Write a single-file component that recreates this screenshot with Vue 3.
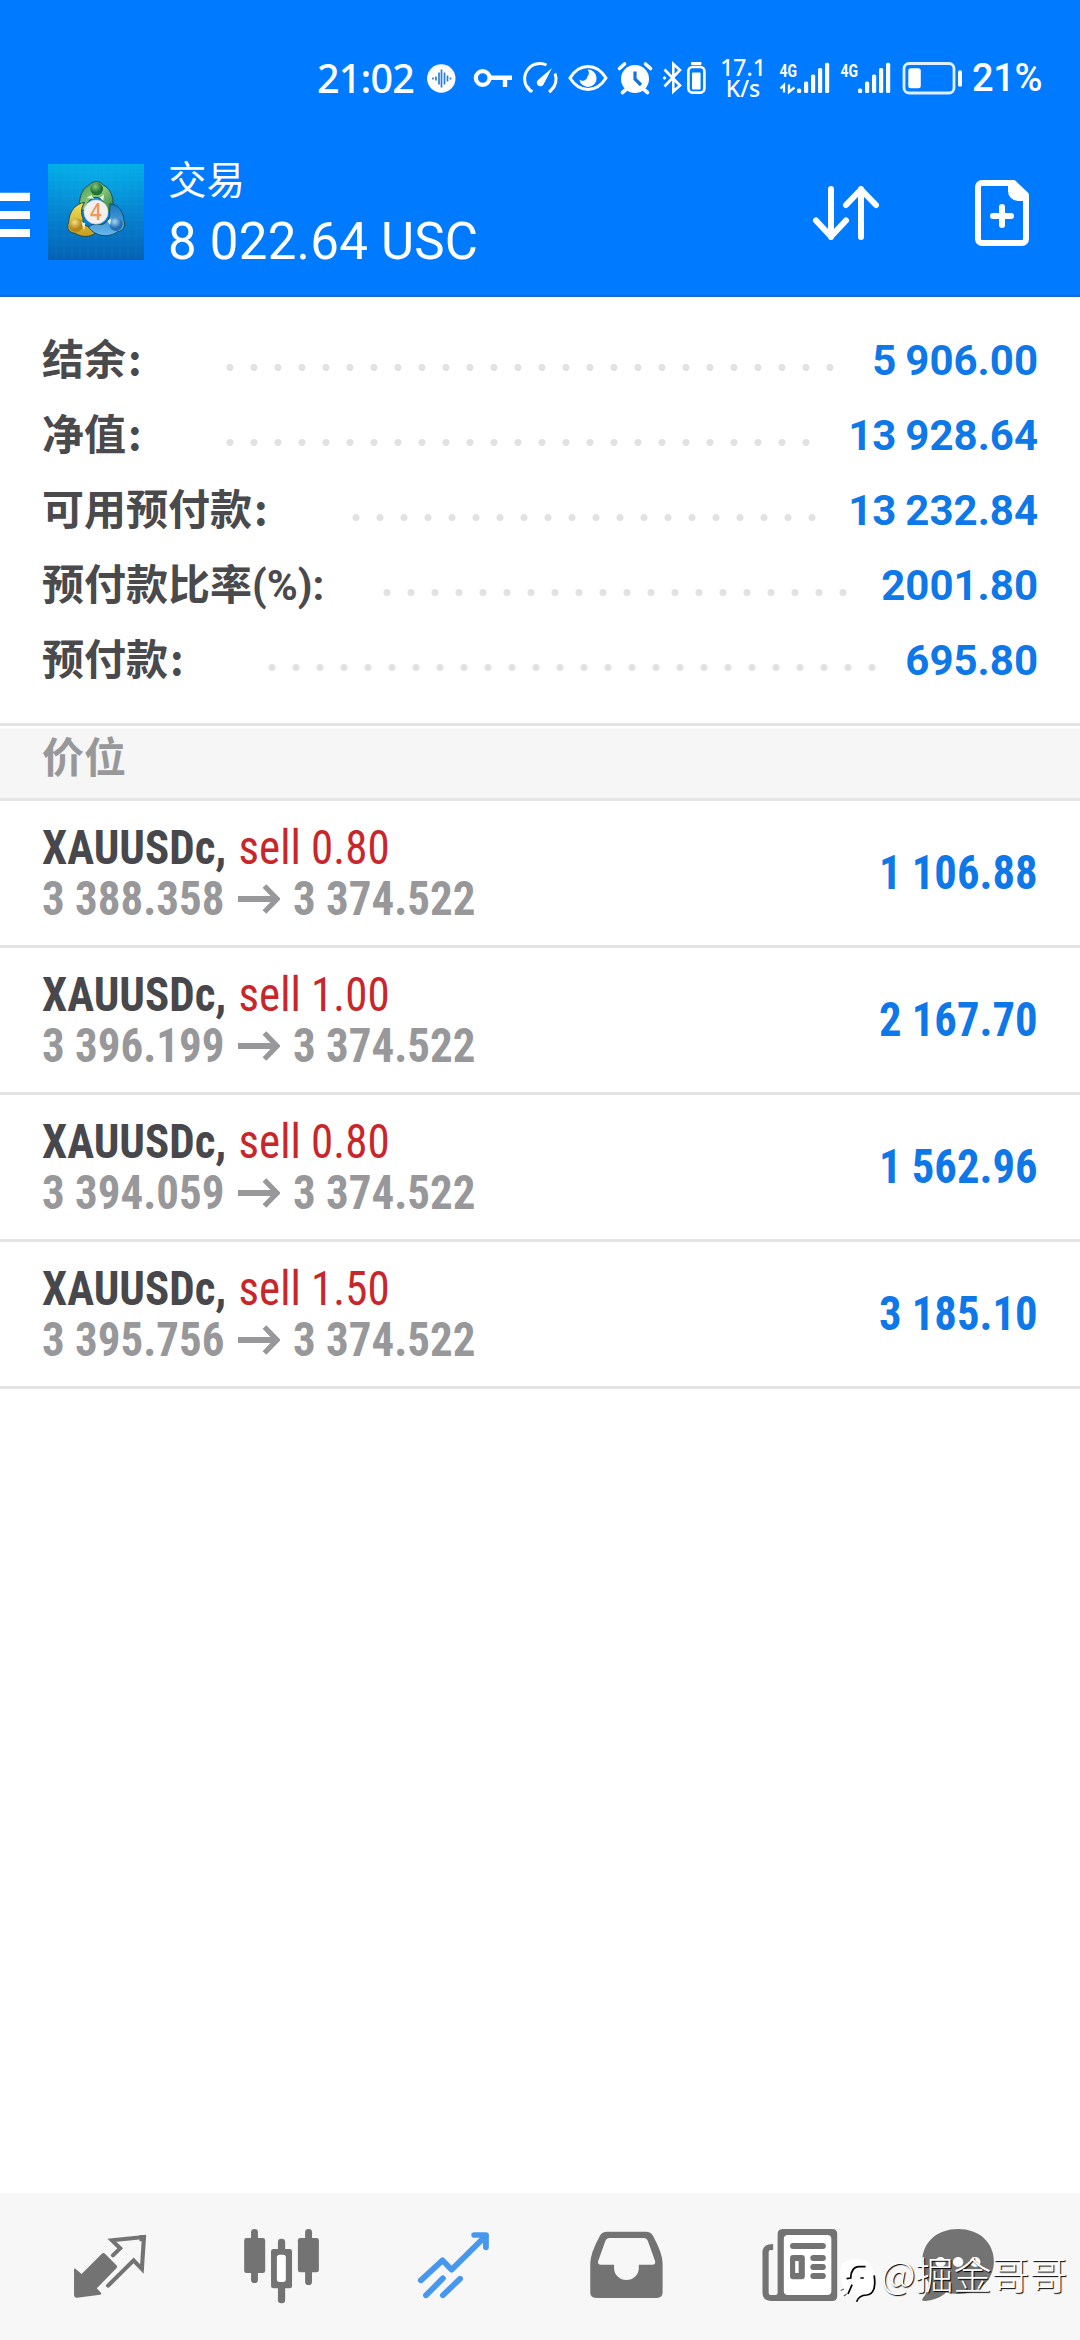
<script setup>
const summary = [
  { label: '结余', colon: true, lead: 176, dots: 26, value: '5 906.00' },
  { label: '净值', colon: true, lead: 176, dots: 25, value: '13 928.64' },
  { label: '可用预付款', colon: true, lead: 302, dots: 20, value: '13 232.84' },
  { label: '预付款比率(%):', colon: false, lead: 333, dots: 20, value: '2001.80' },
  { label: '预付款', colon: true, lead: 218, dots: 26, value: '695.80' },
]
const positions = [
  { volume: '0.80', open: '3 388.358', current: '3 374.522', profit: '1 106.88' },
  { volume: '1.00', open: '3 396.199', current: '3 374.522', profit: '2 167.70' },
  { volume: '0.80', open: '3 394.059', current: '3 374.522', profit: '1 562.96' },
  { volume: '1.50', open: '3 395.756', current: '3 374.522', profit: '3 185.10' },
]
// signal bars: x offset and top edge
const bars = [[0, 88.5], [7, 81.5], [14, 74.5], [21, 68], [28, 62.7]]
const wave = [[433, 1], [436, 2], [439, 6], [441.5, 9], [444.5, 6], [447.5, 3], [450.5, 1]]
</script>

<template>
  <div class="screen">
    <header class="top">
      <div class="status">
        <span class="time">21:02</span>
        <svg width="36" height="60" viewBox="424 48 36 60">
          <circle cx="441.3" cy="78.5" r="14.2" fill="#fff" />
          <path v-for="w in wave" :key="w[0]" :d="`M${w[0]} ${78.5 - w[1]}V${78.5 + w[1]}`" stroke="#2a7fd0" stroke-width="1.7" />
        </svg>
        <svg width="60" height="60" viewBox="460 48 60 60" fill="none" stroke="#fff">
          <circle cx="482.7" cy="78" r="6.9" stroke-width="4.2" />
          <path d="M490 77.8H512M505 78V87" stroke-width="4.4" />
        </svg>
        <svg width="44" height="60" viewBox="520 48 44 60" fill="none" stroke="#fff" stroke-width="3">
          <path d="M532.5 91.5L529.5 90A15.3 15.3 0 0 1 546.5 65M555 73.5A15.3 15.3 0 0 1 551 90.5L549 92M527.5 86.5L531 92M554 86.5L549.5 92" />
          <path d="M552 68L543.5 84.5A3.6 3.6 0 1 1 538 80Z" fill="#fff" stroke="none" />
        </svg>
        <svg width="50" height="60" viewBox="564 48 50 60">
          <path d="M570 78C575 70 581 66.5 588 66.5S601 70 606 78C601 86 595 89.5 588 89.5S575 86 570 78Z" fill="none" stroke="#fff" stroke-width="3" />
          <path d="M587.5 69.5A8.7 8.7 0 1 1 579.3 79.5A5 5 0 0 0 587.5 76.5A5.5 5.5 0 0 0 587.5 69.5Z" fill="#fff" />
        </svg>
        <svg width="44" height="60" viewBox="614 48 44 60">
          <circle cx="635" cy="79" r="14" fill="#fff" />
          <path d="M619.5 68.5L624.5 64M650.5 68.5L645.5 64M625.5 90L622.5 92.5M644.5 90L647.5 92.5" stroke="#fff" stroke-width="3.6" stroke-linecap="round" />
          <path d="M635 71.5V79L641 85" stroke="#1473d6" stroke-width="3.2" fill="none" />
        </svg>
        <svg width="26" height="60" viewBox="658 48 26 60" fill="none" stroke="#fff" stroke-width="2.6">
          <path d="M664.5 69.5L680 85.5L673.3 91.5V64L680 70L664.5 86.5" />
          <circle cx="664.5" cy="78" r="1.2" fill="#fff" stroke-width="1" />
        </svg>
        <svg width="30" height="60" viewBox="684 48 30 60">
          <rect x="688.4" y="67" width="16" height="25.6" rx="4" fill="none" stroke="#fff" stroke-width="2.6" />
          <rect x="692" y="72.5" width="8.6" height="17" rx="1" fill="#fff" />
          <rect x="691" y="62" width="10.5" height="3" rx="1" fill="#fff" />
        </svg>
        <div class="speed"><span>17.1</span><span>K/s</span></div>
        <svg width="64" height="60" viewBox="774 48 64 60" fill="#fff">
          <text x="779.5" y="76.5" class="net" textLength="17.5" lengthAdjust="spacingAndGlyphs">4G</text>
          <path d="M784 92.5V85L780.5 88.5M789 84.5V92L794.5 87.5" fill="none" stroke="#fff" stroke-width="2.3" />
          <rect v-for="b in bars" :key="b[0]" :x="797 + b[0]" :y="b[1]" width="4.2" :height="93 - b[1]" rx="1.6" />
        </svg>
        <svg width="60" height="60" viewBox="838 48 60 60" fill="#fff">
          <text x="840.5" y="76.5" class="net" textLength="17.5" lengthAdjust="spacingAndGlyphs">4G</text>
          <rect v-for="b in bars" :key="b[0]" :x="858 + b[0]" :y="b[1]" width="4.2" :height="93 - b[1]" rx="1.6" />
        </svg>
        <svg width="72" height="60" viewBox="898 48 72 60" fill="#fff">
          <rect x="904" y="63.5" width="50" height="29.5" rx="5" fill="none" stroke="#fff" stroke-opacity=".88" stroke-width="2.8" />
          <rect x="908.3" y="68.3" width="12.5" height="20" rx="2.5" />
          <rect x="958" y="70.3" width="4" height="16.5" rx="2" />
        </svg>
        <span class="percent">21%</span>
      </div>
      <div class="bar">
        <svg width="48" height="137" viewBox="0 160 48 137"><path d="M0 196.8H30M0 215H30M0 233H30" stroke="#fff" stroke-width="8.2" /></svg>
        <svg class="logo" width="96" height="96" viewBox="144 73 288 288">
          <defs>
            <linearGradient id="sky" x1="0" y1="0" x2="0" y2="1"><stop offset="0" stop-color="#02aee8" /><stop offset=".45" stop-color="#0588d3" /><stop offset="1" stop-color="#0461b4" /></linearGradient>
            <radialGradient id="glow"><stop offset="0" stop-color="#12b6ee" stop-opacity=".25" /><stop offset="1" stop-color="#12b6ee" stop-opacity="0" /></radialGradient>
            <linearGradient id="green" x1="0" y1="0" x2="1" y2="1"><stop offset="0" stop-color="#3f9a50" /><stop offset=".5" stop-color="#8ac67c" /><stop offset="1" stop-color="#23803a" /></linearGradient>
            <linearGradient id="gold" x1="0" y1="0" x2="0" y2="1"><stop offset="0" stop-color="#f2e25a" /><stop offset="1" stop-color="#c49c1b" /></linearGradient>
            <linearGradient id="azure" x1="0" y1="0" x2="0" y2="1"><stop offset="0" stop-color="#1a74c0" /><stop offset="1" stop-color="#66b8ee" /></linearGradient>
            <radialGradient id="gb" cx=".4" cy=".3"><stop offset="0" stop-color="#86c784" /><stop offset="1" stop-color="#1e7233" /></radialGradient>
            <radialGradient id="yb" cx=".4" cy=".3"><stop offset="0" stop-color="#f5e37c" /><stop offset="1" stop-color="#b2861a" /></radialGradient>
            <radialGradient id="bb" cx=".4" cy=".3"><stop offset="0" stop-color="#a6d9f5" /><stop offset="1" stop-color="#226eb4" /></radialGradient>
          </defs>
          <rect x="144" y="73" width="288" height="288" fill="url(#sky)" />
          <circle cx="288" cy="120" r="130" fill="url(#glow)" />
          <path d="M168 73V361M192 73V361M216 73V361M240 73V361M264 73V361M288 73V361M312 73V361M336 73V361M360 73V361M384 73V361M408 73V361M144 97H432M144 121H432M144 145H432M144 169H432M144 193H432M144 217H432M144 241H432M144 265H432M144 289H432M144 313H432M144 337H432" stroke="#fff" stroke-opacity=".07" stroke-width="2" />
          <g stroke="#1c4c52" stroke-width="3">
            <path d="M238 198C238 164 250 144 268 136C280 122 298 122 310 136C332 148 341 172 339 198C336 216 326 221 318 211C315 188 304 174 288 173C270 175 259 190 256 213C246 213 240 208 238 198Z" fill="url(#green)" />
            <path d="M254 188C228 192 207 214 206 248C198 266 208 280 226 281C244 294 272 294 289 278C295 267 288 256 274 262C256 262 247 252 249 236C242 220 244 202 254 188Z" fill="url(#gold)" />
            <path d="M330 192C352 194 370 212 371 240C379 258 370 275 352 276C330 294 288 294 265 262C277 252 290 251 304 255C322 250 330 236 329 220Z" fill="url(#azure)" />
          </g>
          <circle cx="290" cy="148" r="19" fill="url(#gb)" />
          <circle cx="228" cy="256" r="21" fill="url(#yb)" />
          <circle cx="348" cy="254" r="20" fill="url(#bb)" />
          <path d="M260 174L274 166L282 178ZM300 174L312 164L310 184ZM244 248L256 250L252 272ZM322 244L334 236L330 256Z" fill="#e9f3df" />
          <circle cx="288" cy="217" r="36" fill="#f1f0ee" stroke="#d6d6d6" stroke-width="2" />
          <text x="270" y="241" class="four" textLength="35" lengthAdjust="spacingAndGlyphs">4</text>
        </svg>
        <div class="title">
          <div class="name">交易</div>
          <div class="total">8 022.64 USC</div>
        </div>
        <svg class="tools" width="300" height="137" viewBox="780 160 300 137" fill="none" stroke="#fff" stroke-width="6" stroke-linecap="round" stroke-linejoin="round">
          <path d="M831 189V237M816 220.5L831 236.5L846 220.5M861 237V189M846 205L861 189.5L876 205" />
          <path d="M982 183H1013.5L1026 195V239A4 4 0 0 1 1022 243H982A4 4 0 0 1 978 239V187A4 4 0 0 1 982 183ZM993 216H1011M1002 207V225" />
          <path d="M1008 183H1014L1026 195V201H1018A10 10 0 0 1 1008 191Z" fill="#fff" stroke="none" />
        </svg>
      </div>
    </header>

    <section class="summary">
      <div v-for="row in summary" :key="row.label" class="line">
        <span class="label" :style="{ width: row.lead + 'px' }">{{ row.label }}<span v-if="row.colon" class="cjk">:</span></span>
        <span class="dots" :style="{ width: row.dots * 24 + 'px' }"></span>
        <span class="value">{{ row.value }}</span>
      </div>
    </section>

    <div class="section">价位</div>

    <main>
      <div v-for="(p, i) in positions" :key="i" class="position">
        <div class="info">
          <div class="deal"><b>XAUUSDc,</b> <span>sell {{ p.volume }}</span></div>
          <div class="prices">
            <span class="price">{{ p.open }}</span>
            <svg width="45" height="30" viewBox="0 0 42 30" preserveAspectRatio="none" fill="none" stroke="#98989a"><path d="M0 15H38" stroke-width="6" /><path d="M26.500 2L39 15L26.500 28" stroke-width="5.200" /></svg>
            <span class="price">{{ p.current }}</span>
          </div>
        </div>
        <div class="profit">{{ p.profit }}</div>
      </div>
    </main>

    <nav>
      <svg viewBox="0 39 522.67 441" preserveAspectRatio="none" fill="#737373">
        <path d="M215 267Q216 264 219 266L237 282L295 222Q300 217 305 221L338 256Q342 260 338 265L281 325L293 338Q296 343 290 344L224 353Q215 354 215 346Z" />
        <path d="M328 226L349 205L325 181L418 171L412 267L388 241L314 317" fill="none" stroke="#737373" stroke-width="12" stroke-linecap="round" />
        <path d="M405 165H424L422 184H405Z" />
      </svg>
      <svg viewBox="522.67 39 522.67 441" preserveAspectRatio="none" fill="#737373">
        <rect x="709" y="174" width="61" height="105" rx="7" /><rect x="729" y="147" width="20" height="162" rx="10" />
        <rect x="865" y="174" width="61" height="103" rx="7" /><rect x="886" y="147" width="20" height="168" rx="10" />
        <rect x="787" y="207" width="61" height="118" rx="7" /><rect x="807" y="176" width="21" height="194" rx="10" />
        <rect x="804" y="224" width="26" height="82" rx="8" fill="#fff" />
      </svg>
      <svg viewBox="1045.33 39 522.67 441" preserveAspectRatio="none" fill="none" stroke="#4797ee" stroke-width="17" stroke-linecap="round" stroke-linejoin="round">
        <path d="M1222 301L1285 241L1311 269L1411 167M1377 165H1411V202" />
        <path d="M1237 346L1286 295M1286 346L1336 296" />
      </svg>
      <svg viewBox="0 39 522.67 441" preserveAspectRatio="none" fill="#737373">
        <path d="M195 155H307Q322 155 328 167Q356 220 356 250V337Q356 354 339 354H163Q146 354 146 337V250Q146 220 174 167Q180 155 195 155Z" />
        <path d="M201 174H302Q310 174 313 182L334 243Q337 254 326 254H287V264A36 36 0 0 1 215 264V254H177Q166 254 169 243L190 182Q193 174 201 174Z" fill="#f7f7f7" />
      </svg>
      <svg viewBox="522.67 39 522.67 441" preserveAspectRatio="none" fill="#737373">
        <path d="M677 192V210H670Q664 210 664 216V339Q664 345 670 345H684Q690 345 690 338V162Q690 147 706 147H848Q863 147 863 162V348Q863 363 848 363H670Q646 361 646 338V214Q648 192 677 192Z" />
        <rect x="708" y="165" width="138" height="180" rx="12" fill="#fff" />
        <rect x="726" y="189" width="104" height="18" rx="9" /><rect x="726" y="225" width="43" height="73" rx="9" /><rect x="741" y="243" width="10" height="36" fill="#fff" />
        <rect x="785" y="225" width="45" height="18" rx="9" /><rect x="785" y="252" width="45" height="18" rx="9" /><rect x="785" y="279" width="45" height="18" rx="9" />
      </svg>
      <svg viewBox="1045.33 39 522.67 441" preserveAspectRatio="none" fill="#737373">
        <path d="M1214 147C1276 147 1318 188 1318 244C1318 300 1276 342 1214 342C1200 342 1190 340 1180 337C1162 354 1140 362 1116 363Q1106 363 1112 354Q1128 335 1129 308Q1110 282 1110 244C1110 188 1152 147 1214 147Z" />
        <g fill="#fff"><circle cx="1163" cy="246" r="15" /><circle cx="1214" cy="246" r="15" /><circle cx="1264" cy="246" r="15" /></g>
      </svg>
      <div class="watermark">
        <svg width="40" height="50" viewBox="870 235 116 150" preserveAspectRatio="none">
          <path d="M880 254Q915 232 950 248Q976 265 974 318Q972 350 946 352Q926 353 920 370L922 346L880 352L874 338L884 330Q864 290 880 254Z" fill="#fff" />
          <path d="M892 300L904 298Q905 266 926 264H947M932 298H942M908 318L896 346M972 290Q980 345 950 349Q927 350 921 369" fill="none" stroke="#000" stroke-width="5" />
          <path d="M875 336L884 331M884 352L892 346" stroke="#555" stroke-width="3" />
        </svg>
        <span>@掘金哥哥</span>
      </div>
    </nav>
  </div>
</template>

<style>
body { background: #fff; }
</style>

<style scoped>
.screen { width: 1080px; height: 2340px; display: flex; flex-direction: column; background: #fff; font-family: Roboto, "Noto Sans CJK SC", sans-serif; overflow: hidden; white-space: nowrap; }
svg { display: block; flex: none; }
.top { height: 297px; box-sizing: border-box; background: #007aff; color: #fff; border-bottom: 2px solid #1a6bc0; flex: none; }
.status { height: 160px; box-sizing: border-box; padding-top: 48px; display: flex; }
.time { width: 107px; margin-left: 317px; font: 500 39.500px/60px "Noto Sans", sans-serif; letter-spacing: -.8px; }
.speed { width: 60px; height: 60px; display: flex; flex-direction: column; align-items: center; padding-top: 9px; box-sizing: border-box; font: 500 23px/20.500px "Noto Sans", sans-serif; transform: translateX(-1px); }
.net { font: 700 19px Roboto, sans-serif; }
.percent { font: 500 38px/60px Roboto, sans-serif; margin-left: 2px; letter-spacing: -.4px; }
.bar { height: 135px; display: flex; }
.logo { margin-top: 4px; }
.four { font: 600 70px "Open Sans", sans-serif; fill: #ee985c; }
.title { width: 612px; flex: none; padding-left: 24px; font-size: 51px; }
.name { font: 400 38.500px/34px "Noto Sans CJK SC", sans-serif; }
.total { line-height: 60px; margin-top: 18px; letter-spacing: .25px; }
.summary { padding: 26px 42px 25px; flex: none; }
.line { height: 75px; display: flex; font: 700 42px/75px Roboto, "Noto Sans CJK SC", sans-serif; color: #4a4a4d; }
.label { flex: none; }
.cjk { font-family: "Noto Sans CJK SC", sans-serif; line-height: 0; margin-left: 2px; }
.dots { flex: none; height: 7px; margin-top: 41px; background: radial-gradient(circle at 12px 3.500px, #e2e2e2 3.200px, transparent 3.900px) 0 0 / 24px 7px repeat-x; }
.value { flex: 1; text-align: right; color: #0e78e8; word-spacing: -1.500px; }
.section { height: 78px; box-sizing: border-box; border-top: 3px solid #e4e4e4; border-bottom: 3px solid #e4e4e4; background: linear-gradient(#fff 2px, #f6f6f6 3px); padding-left: 42px; font-size: 42px; font-weight: 700; line-height: 66px; color: #98989a; flex: none; }
.position { height: 147px; box-sizing: border-box; border-bottom: 3px solid #e4e4e4; padding: 0 42px; display: flex; justify-content: space-between; align-items: center; font: 48px/51px "Roboto Condensed", Roboto, sans-serif; font-stretch: 75%; color: #48484c; }
.info { transform: scaleX(.937); transform-origin: left; }
.deal span { color: #c9262b; margin-left: 2px; }
.prices { display: flex; align-items: center; color: #98989a; font-weight: 700; }
.prices svg { margin: 0 14px; }
.profit { color: #0e78e8; font-weight: 700; transform: scaleX(.93); transform-origin: right; margin-top: -2px; }
nav { position: relative; height: 147px; margin-top: auto; display: flex; background: #f7f7f7; flex: none; }
nav > svg { width: 180px; height: 147px; }
.watermark { position: absolute; left: 839px; top: 64px; display: flex; }
.watermark span { margin: -9px 0 0 2px; font: 300 38px/50px "Noto Sans CJK SC", sans-serif; color: #fff; text-shadow: 1px 1px 1px #000; }
</style>
